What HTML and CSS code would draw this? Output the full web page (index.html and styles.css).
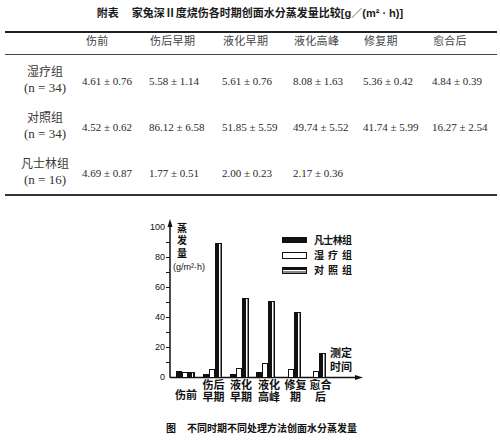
FILE: index.html
```html
<!DOCTYPE html>
<html lang="zh">
<head>
  <meta charset="UTF-8">
  <meta name="viewport" content="width=device-width, initial-scale=1.0">
  <title>家兔深Ⅱ度烧伤创面水分蒸发量</title>
  <link rel="stylesheet" href="styles.css">
</head>
<body>
  <div class="page">
    <h1 class="title"><span class="tag">附表</span>家兔深Ⅱ度烧伤各时期创面水分蒸发量比较[g／(m² · h)]</h1>

    <div class="table">
      <div class="head">
        <div></div>
        <div class="th first">伤前</div>
        <div class="th">伤后早期</div>
        <div class="th">液化早期</div>
        <div class="th">液化高峰</div>
        <div class="th">修复期</div>
        <div class="th">愈合后</div>
      </div>
      <div class="row r1">
        <div class="group"><span class="name">湿疗组</span><span class="n">(n = 34)</span></div>
        <div class="val">4.61 ± 0.76</div>
        <div class="val">5.58 ± 1.14</div>
        <div class="val">5.61 ± 0.76</div>
        <div class="val">8.08 ± 1.63</div>
        <div class="val">5.36 ± 0.42</div>
        <div class="val">4.84 ± 0.39</div>
      </div>
      <div class="row">
        <div class="group"><span class="name">对照组</span><span class="n">(n = 34)</span></div>
        <div class="val">4.52 ± 0.62</div>
        <div class="val">86.12 ± 6.58</div>
        <div class="val">51.85 ± 5.59</div>
        <div class="val">49.74 ± 5.52</div>
        <div class="val">41.74 ± 5.99</div>
        <div class="val">16.27 ± 2.54</div>
      </div>
      <div class="row">
        <div class="group"><span class="name">凡士林组</span><span class="n">(n = 16)</span></div>
        <div class="val">4.69 ± 0.87</div>
        <div class="val">1.77 ± 0.51</div>
        <div class="val">2.00 ± 0.23</div>
        <div class="val">2.17 ± 0.36</div>
        <div class="val"></div>
        <div class="val"></div>
      </div>
    </div>

    <!-- chart uses page coordinates through the viewBox -->
    <svg class="chart" width="500" height="248" viewBox="0 196 500 248">
      <!-- axes -->
      <line class="axis" x1="170" y1="377.5" x2="170" y2="224"/>
      <polygon class="ink" points="170,219 167.5,227 172.5,227"/>
      <line class="axis" x1="170" y1="377.5" x2="358" y2="377.5"/>
      <polygon class="ink" points="363,377.5 355,375 355,380"/>

      <g class="ticks">
        <line x1="166" y1="362.5" x2="170" y2="362.5"/>
        <line x1="166" y1="347.5" x2="170" y2="347.5"/>
        <line x1="166" y1="332.5" x2="170" y2="332.5"/>
        <line x1="166" y1="317.5" x2="170" y2="317.5"/>
        <line x1="166" y1="302.5" x2="170" y2="302.5"/>
        <line x1="166" y1="287.5" x2="170" y2="287.5"/>
        <line x1="166" y1="272.5" x2="170" y2="272.5"/>
        <line x1="166" y1="257.5" x2="170" y2="257.5"/>
        <line x1="166" y1="242.5" x2="170" y2="242.5"/>
      </g>
      <g class="num">
        <text x="165" y="230">100</text>
        <text x="165" y="260">80</text>
        <text x="165" y="290">60</text>
        <text x="165" y="320">40</text>
        <text x="165" y="350">20</text>
        <text x="165" y="380">0</text>
      </g>

      <!-- y unit -->
      <g class="unit">
        <text x="182" y="232">蒸</text>
        <text x="182" y="244">发</text>
        <text x="182" y="257">量</text>
      </g>
      <text class="unit-sm" x="173" y="270">(g/m²·h)</text>

      <!-- legend -->
      <rect class="ink" x="282" y="237" width="25" height="6"/>
      <rect class="hollow" x="282.5" y="252.5" width="24" height="6"/>
      <rect class="ink" x="282" y="267" width="25" height="7"/>
      <rect class="stripe" x="283" y="270" width="23" height="1"/>
      <rect class="grey" x="283" y="271" width="23" height="2"/>
      <g class="legend">
        <text x="314" y="244" textLength="38" lengthAdjust="spacing">凡士林组</text>
        <text x="314" y="259" textLength="38" lengthAdjust="spacing">湿疗组</text>
        <text x="314" y="274" textLength="38" lengthAdjust="spacing">对照组</text>
      </g>

      <!-- 伤前 -->
      <rect class="ink" x="176" y="371" width="6" height="6"/>
      <rect class="hollow" x="182.5" y="372.5" width="5" height="5"/>
      <rect class="ink" x="188" y="372" width="7" height="5"/>
      <rect class="stripe" x="192" y="373" width="1" height="4"/>
      <!-- 伤后早期 -->
      <rect class="ink" x="203" y="374" width="6" height="3"/>
      <rect class="hollow" x="209.5" y="369.5" width="5" height="8"/>
      <rect class="ink" x="215" y="243" width="7" height="134"/>
      <rect class="stripe" x="219" y="244" width="1" height="133"/>
      <rect class="grey" x="220" y="244" width="1" height="133"/>
      <!-- 液化早期 -->
      <rect class="ink" x="230" y="374" width="6" height="3"/>
      <rect class="hollow" x="236.5" y="368.5" width="5" height="9"/>
      <rect class="ink" x="242" y="298" width="7" height="79"/>
      <rect class="stripe" x="246" y="299" width="1" height="78"/>
      <rect class="grey" x="247" y="299" width="1" height="78"/>
      <!-- 液化高峰 -->
      <rect class="ink" x="256" y="372" width="6" height="5"/>
      <rect class="hollow" x="262.5" y="363.5" width="5" height="14"/>
      <rect class="ink" x="268" y="301" width="7" height="76"/>
      <rect class="stripe" x="272" y="302" width="1" height="75"/>
      <rect class="grey" x="273" y="302" width="1" height="75"/>
      <!-- 修复期 -->
      <rect class="hollow" x="288.5" y="369.5" width="5" height="8"/>
      <rect class="ink" x="294" y="312" width="7" height="65"/>
      <rect class="stripe" x="298" y="313" width="1" height="64"/>
      <rect class="grey" x="299" y="313" width="1" height="64"/>
      <!-- 愈合后 -->
      <rect class="hollow" x="313.5" y="371.5" width="5" height="6"/>
      <rect class="ink" x="319" y="353" width="7" height="24"/>
      <rect class="stripe" x="323" y="354" width="1" height="23"/>
      <rect class="grey" x="324" y="354" width="1" height="23"/>

      <!-- x labels -->
      <g class="xlab">
        <text x="186" y="399">伤前</text>
        <text x="213.5" y="389">伤后</text>
        <text x="213.5" y="401">早期</text>
        <text x="241" y="389">液化</text>
        <text x="241" y="401">早期</text>
        <text x="269" y="389">液化</text>
        <text x="269" y="401">高峰</text>
        <text x="295.5" y="389">修复</text>
        <text x="295.5" y="401">期</text>
        <text x="320.5" y="389">愈合</text>
        <text x="320.5" y="401">后</text>
        <text x="341" y="357">测定</text>
        <text x="341" y="371">时间</text>
      </g>

      <!-- caption -->
      <g class="caption">
        <text x="166" y="432">图</text>
        <text x="187" y="432" textLength="170" lengthAdjust="spacing">不同时期不同处理方法创面水分蒸发量</text>
      </g>
    </svg>
  </div>
</body>
</html>
```

FILE: styles.css
```css
body {
  margin: 0;
  background: #fff;
  color: #333;
  overflow: hidden;
}
.page {
  width: 500px;
  height: 444px;
}
.title {
  margin: 0;
  padding-top: 6px;
  height: 14px;
  line-height: 14px;
  font-family: "Liberation Sans", "Noto Sans CJK SC", sans-serif;
  font-size: 11px;
  font-weight: 700;
  text-align: center;
  color: #1a1a1a;
}
.tag {
  margin-right: 13px;
}
.table {
  margin: 11px 3px 0 5px;
  border-top: 2px solid #222;
  border-bottom: 2px solid #333;
}
.head,
.row {
  display: grid;
  grid-template-columns: 77px 67px 73px 71px 70px 69px 65px;
}
.head {
  height: 21px;
  border-bottom: 1px solid #444;
}
.th {
  font-family: "Noto Sans CJK SC", sans-serif;
  font-size: 11px;
  line-height: 14px;
  color: #444;
  padding-left: 1px;
  letter-spacing: 0.3px;
}
.th.first {
  padding-left: 4px;
}
.row {
  height: 46px;
  align-items: center;
}
.row.r1 {
  height: 47px;
}
.group {
  display: flex;
  flex-direction: column;
  align-items: center;
  padding-left: 3px;
}
.name {
  font-family: "Noto Sans CJK SC", sans-serif;
  font-size: 12px;
  line-height: 17px;
  color: #3a3a3a;
}
.n {
  font-family: "Liberation Serif", serif;
  font-size: 13px;
  line-height: 17px;
  color: #333;
}
.val {
  font-family: "Liberation Serif", serif;
  font-size: 11px;
  line-height: 14px;
  padding-top: 4px;
  color: #2a2a2a;
  white-space: nowrap;
}
.chart {
  display: block;
}
.chart text {
  font-family: "Liberation Sans", "Noto Sans CJK SC", sans-serif;
  font-weight: 700;
  fill: #111;
}
.axis {
  stroke: #111;
  stroke-width: 1.5;
}
.ticks line {
  stroke: #111;
  stroke-width: 1;
}
.ink {
  fill: #111;
}
.hollow {
  fill: #fff;
  stroke: #111;
  stroke-width: 1;
}
.stripe {
  fill: #fff;
}
.grey {
  fill: #8a8a8a;
}
.chart .num text {
  font-size: 9px;
  font-weight: 400;
  text-anchor: end;
}
.chart .unit text {
  font-size: 10px;
  text-anchor: middle;
}
.chart .unit-sm {
  font-size: 9px;
  font-weight: 400;
}
.chart .legend text {
  font-size: 10px;
}
.chart .xlab text {
  font-size: 11px;
  text-anchor: middle;
}
.chart .caption text {
  font-size: 10px;
}
```
